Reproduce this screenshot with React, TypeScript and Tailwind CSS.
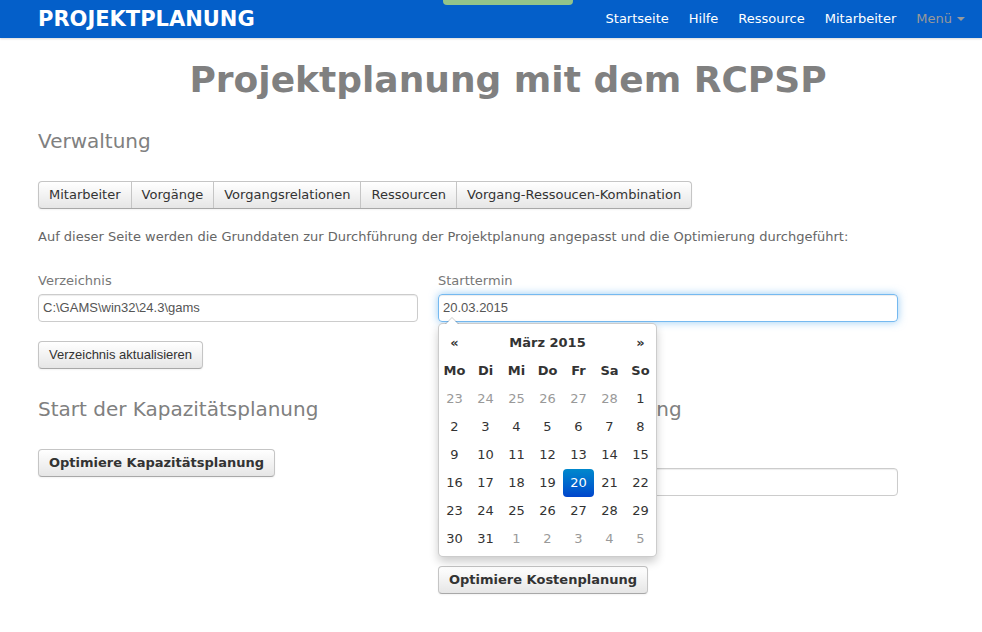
import React from 'react';

const verdana = "font-['DejaVu_Sans',Verdana,sans-serif]";
const arial = "font-['Liberation_Sans',Arial,sans-serif]";

const NavItem = ({ children }: { children: React.ReactNode }) => (
  <a href="#" className="px-[10px] text-[13px] leading-[38px] text-white">
    {children}
  </a>
);

const Btn = ({ children, bold, font = verdana }: { children: React.ReactNode; bold?: boolean; font?: string }) => (
  <button
    className={`${font} ${bold ? 'font-bold' : ''} text-[13px] leading-[18px] text-[#333] px-[10px] py-[4px] rounded-[4px] border border-[#c5c5c5] border-b-[#a8a8a8] bg-gradient-to-b from-white to-[#e6e6e6] shadow-[inset_0_1px_0_rgba(255,255,255,.2),0_1px_2px_rgba(0,0,0,.05)]`}
  >
    {children}
  </button>
);

const Input = ({ value, focus }: { value: string; focus?: boolean }) => (
  <input
    readOnly
    value={value}
    className={`${arial} block w-full text-[13px] leading-[18px] text-[#555] px-[4px] py-[4px] rounded-[4px] border outline-none ${
      focus
        ? 'border-[rgba(82,168,236,0.8)] shadow-[inset_0_1px_1px_rgba(0,0,0,.075),0_0_8px_rgba(82,168,236,.6)]'
        : 'border-[#ccc] shadow-[inset_0_1px_1px_rgba(0,0,0,.075)]'
    }`}
  />
);

const Label = ({ children }: { children: React.ReactNode }) => (
  <div className="text-[13px] leading-[18px] text-[#777] mb-[4px]">{children}</div>
);

const H3 = ({ children }: { children: React.ReactNode }) => (
  <h3 className="text-[20px] leading-[24px] text-[#808080] font-normal">{children}</h3>
);

const weeks: [number, boolean][][] = [
  [[23, true], [24, true], [25, true], [26, true], [27, true], [28, true], [1, false]],
  [[2, false], [3, false], [4, false], [5, false], [6, false], [7, false], [8, false]],
  [[9, false], [10, false], [11, false], [12, false], [13, false], [14, false], [15, false]],
  [[16, false], [17, false], [18, false], [19, false], [20, false], [21, false], [22, false]],
  [[23, false], [24, false], [25, false], [26, false], [27, false], [28, false], [29, false]],
  [[30, false], [31, false], [1, true], [2, true], [3, true], [4, true], [5, true]],
];

const DatePicker = () => (
  <div className="absolute left-0 top-[29px] z-20 w-[219px] bg-white border border-[rgba(0,0,0,0.2)] rounded-[5px] shadow-[0_5px_10px_rgba(0,0,0,0.2)] pt-[5px] pb-[3px] text-[13px] text-[#333]">
    <div className="absolute -top-[7px] left-[6px] w-0 h-0 border-l-[7px] border-r-[7px] border-b-[7px] border-l-transparent border-r-transparent border-b-[rgba(0,0,0,0.2)]" />
    <div className="absolute -top-[6px] left-[7px] w-0 h-0 border-l-[6px] border-r-[6px] border-b-[6px] border-l-transparent border-r-transparent border-b-white" />
    <div className="grid grid-cols-7 text-center">
      <div className="h-[28px] leading-[28px] font-bold">«</div>
      <div className="col-span-5 h-[28px] leading-[28px] font-bold">März 2015</div>
      <div className="h-[28px] leading-[28px] font-bold">»</div>
      {['Mo', 'Di', 'Mi', 'Do', 'Fr', 'Sa', 'So'].map((d) => (
        <div key={d} className="h-[28px] leading-[28px] font-bold">
          {d}
        </div>
      ))}
      {weeks.flat().map(([d, old], i) =>
        d === 20 && !old ? (
          <div
            key={i}
            className="h-[28px] leading-[28px] rounded-[4px] text-white bg-gradient-to-b from-[#0088cc] to-[#0044cc]"
          >
            {d}
          </div>
        ) : (
          <div key={i} className={`h-[28px] leading-[28px] ${old ? 'text-[#999]' : ''}`}>
            {d}
          </div>
        ),
      )}
    </div>
  </div>
);

export default function App() {
  return (
    <div className={`${verdana} relative min-h-[632px] bg-white`}>
      <div className="absolute left-[443px] top-0 w-[130px] h-[5px] bg-[#93c48a] rounded-b-[4px] z-10" />
      <nav className="h-[38px] bg-[#045fc9] shadow-[0_1px_2px_rgba(0,0,0,0.15)]">
        <div className="ml-[38px] w-[940px] flex items-center justify-between">
          <a href="#" className="text-white font-bold text-[21px] leading-[38px]">
            PROJEKTPLANUNG
          </a>
          <div className="flex items-center pr-[3px]">
            <NavItem>Startseite</NavItem>
            <NavItem>Hilfe</NavItem>
            <NavItem>Ressource</NavItem>
            <NavItem>Mitarbeiter</NavItem>
            <a href="#" className="flex items-center gap-[5px] px-[10px] text-[13px] leading-[38px] text-[#999]">
              Menü
              <span className="w-0 h-0 border-l-[4px] border-r-[4px] border-t-[4px] border-l-transparent border-r-transparent border-t-[#999]" />
            </a>
          </div>
        </div>
      </nav>

      <main className="ml-[38px] w-[940px]">
        <h1 className="mt-[20px] text-center text-[36px] leading-[44px] font-bold text-[#808080]">
          Projektplanung mit dem RCPSP
        </h1>

        <div className="mt-[27px]">
          <H3>Verwaltung</H3>
        </div>

        <div className="mt-[28px] inline-flex rounded-[4px] border border-[#c5c5c5] border-b-[#a8a8a8] bg-gradient-to-b from-white to-[#e6e6e6] shadow-[0_1px_2px_rgba(0,0,0,.05)] text-[13px] leading-[18px] text-[#333]">
          {['Mitarbeiter', 'Vorgänge', 'Vorgangsrelationen', 'Ressourcen', 'Vorgang-Ressoucen-Kombination'].map(
            (t, i) => (
              <span key={t} className={`px-[10px] py-[4px] ${i > 0 ? 'border-l border-[#c5c5c5]' : ''}`}>
                {t}
              </span>
            ),
          )}
        </div>

        <p className="mt-[19px] text-[13px] leading-[18px] text-[#666]">
          Auf dieser Seite werden die Grunddaten zur Durchführung der Projektplanung angepasst und die Optimierung
          durchgeführt:
        </p>

        <div className="mt-[26px] flex gap-[20px]">
          <div className="w-[380px]">
            <Label>Verzeichnis</Label>
            <Input value="C:\GAMS\win32\24.3\gams" />
            <div className="mt-[19px]">
              <Btn font={arial}>Verzeichnis aktualisieren</Btn>
            </div>
            <div className="mt-[28px]">
              <H3>Start der Kapazitätsplanung</H3>
            </div>
            <div className="mt-[28px]">
              <Btn bold>Optimiere Kapazitätsplanung</Btn>
            </div>
          </div>

          <div className="w-[460px]">
            <Label>Starttermin</Label>
            <div className="relative">
              <Input value="20.03.2015" focus />
              <DatePicker />
            </div>
            <div className="mt-[19px]">
              <Btn font={arial}>Starttermin übernehmen</Btn>
            </div>
            <div className="mt-[28px]">
              <H3>Start der Kostenplanung</H3>
            </div>
            <div className="mt-[25px]">
              <Label>Budget</Label>
              <Input value="" />
            </div>
            <div className="mt-[20px]">
              <Btn font={arial}>Budget setzen</Btn>
            </div>
            <div className="mt-[22px]">
              <Btn bold>Optimiere Kostenplanung</Btn>
            </div>
          </div>
        </div>
      </main>
    </div>
  );
}
